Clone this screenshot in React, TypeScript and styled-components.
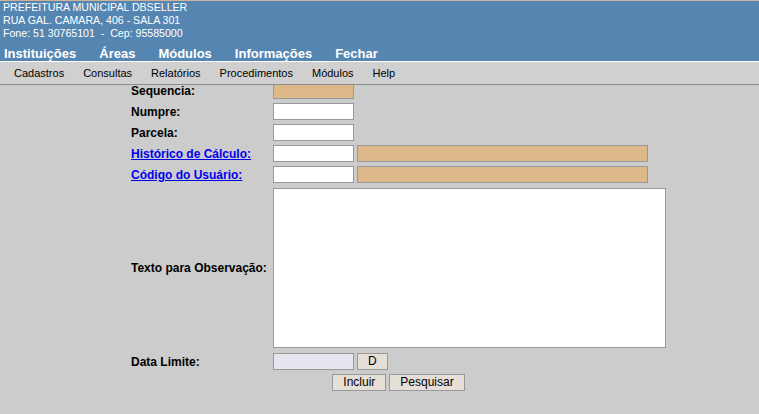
import React from "react";
import styled, { createGlobalStyle } from "styled-components";

const GlobalStyle = createGlobalStyle`
  html, body {
    margin: 0;
    padding: 0;
    height: 414px;
    overflow: hidden;
    background: #cccccc;
    font-family: "Liberation Sans", Arial, sans-serif;
  }
`;

const Page = styled.div`
  display: flex;
  flex-direction: column;
  height: 414px;
`;

const Header = styled.header`
  background: #5586b2;
  border-top: 1px solid #cfb39c;
  border-bottom: 1px solid #ffffff;
  color: #ffffff;
`;

const InfoLine = styled.div`
  font-size: 10.6px;
  line-height: 13px;
  height: 13px;
  padding-left: 3px;
  white-space: pre;
`;

const MainMenu = styled.nav`
  display: flex;
  align-items: flex-end;
  gap: 23px;
  height: 21px;
  padding-left: 4px;
`;

const MainItem = styled.span`
  font-size: 13px;
  font-weight: bold;
  line-height: 15px;
  color: #ffffff;
  white-space: nowrap;
`;

const SubMenu = styled.nav`
  display: flex;
  align-items: center;
  gap: 19px;
  height: 22px;
  padding-left: 14px;
  background: #d0d0d0;
  border-bottom: 1px solid #8c8c8c;
`;

const SubItem = styled.span`
  font-size: 11px;
  color: #000000;
  white-space: nowrap;
`;

const Content = styled.main`
  flex: 1;
  overflow: hidden;
`;

const Form = styled.form`
  display: grid;
  grid-template-columns: 142px 1fr;
  row-gap: 4px;
  align-items: center;
  width: 535px;
  margin: -3px 0 0 131px;
`;

const Label = styled.span`
  font-size: 12px;
  font-weight: bold;
  color: #000000;
  white-space: nowrap;
`;

const LinkLabel = styled.a`
  font-size: 12px;
  font-weight: bold;
  color: #0000ee;
  text-decoration: underline;
  white-space: nowrap;
  cursor: pointer;
`;

const Field = styled.div<{ $pad?: number }>`
  display: flex;
  align-items: center;
  gap: 3px;
  padding: ${(p) => p.$pad ?? 0}px 0;
`;

const TextInput = styled.input<{ $w?: number; $bg?: string }>`
  box-sizing: border-box;
  width: ${(p) => p.$w ?? 81}px;
  height: 17px;
  margin: 0;
  padding: 0 2px;
  border: 1px solid #999999;
  background: ${(p) => p.$bg ?? "#ffffff"};
  font-family: "Liberation Sans", Arial, sans-serif;
  font-size: 12px;
  outline: none;
`;

const TextArea = styled.textarea`
  box-sizing: border-box;
  width: 393px;
  height: 160px;
  margin: 0;
  padding: 2px;
  border: 1px solid #999999;
  background: #ffffff;
  resize: none;
  display: block;
  outline: none;
`;

const Button = styled.button`
  box-sizing: border-box;
  height: 17px;
  margin: 0;
  padding: 0 10px;
  border: 1px solid #999999;
  background: #e6dfd8;
  color: #000000;
  font-family: "Liberation Sans", Arial, sans-serif;
  font-size: 12px;
  line-height: 15px;
  cursor: pointer;
`;

const Actions = styled.div`
  grid-column: 1 / span 2;
  display: flex;
  justify-content: center;
  gap: 3px;
`;

const TAN = "#ddb888";

export default function App() {
  return (
    <Page>
      <GlobalStyle />
      <Header>
        <InfoLine>PREFEITURA MUNICIPAL DBSELLER</InfoLine>
        <InfoLine>RUA GAL. CAMARA, 406 - SALA 301</InfoLine>
        <InfoLine>{"Fone: 51 30765101  -  Cep: 95585000"}</InfoLine>
        <MainMenu>
          <MainItem>Instituições</MainItem>
          <MainItem>Áreas</MainItem>
          <MainItem>Módulos</MainItem>
          <MainItem>Informações</MainItem>
          <MainItem>Fechar</MainItem>
        </MainMenu>
      </Header>
      <SubMenu>
        <SubItem>Cadastros</SubItem>
        <SubItem>Consultas</SubItem>
        <SubItem>Relatórios</SubItem>
        <SubItem>Procedimentos</SubItem>
        <SubItem>Módulos</SubItem>
        <SubItem>Help</SubItem>
      </SubMenu>
      <Content>
        <Form onSubmit={(e) => e.preventDefault()}>
          <Label>Sequencia:</Label>
          <Field>
            <TextInput $bg={TAN} readOnly />
          </Field>

          <Label>Numpre:</Label>
          <Field>
            <TextInput />
          </Field>

          <Label>Parcela:</Label>
          <Field>
            <TextInput />
          </Field>

          <LinkLabel>Histórico de Cálculo:</LinkLabel>
          <Field>
            <TextInput />
            <TextInput $w={291} $bg={TAN} readOnly />
          </Field>

          <LinkLabel>Código do Usuário:</LinkLabel>
          <Field>
            <TextInput />
            <TextInput $w={291} $bg={TAN} readOnly />
          </Field>

          <Label>Texto para Observação:</Label>
          <Field $pad={1}>
            <TextArea />
          </Field>

          <Label>Data Limite:</Label>
          <Field>
            <TextInput $bg="#e6e6f0" />
            <Button type="button">D</Button>
          </Field>

          <Actions>
            <Button type="button">Incluir</Button>
            <Button type="button">Pesquisar</Button>
          </Actions>
        </Form>
      </Content>
    </Page>
  );
}
